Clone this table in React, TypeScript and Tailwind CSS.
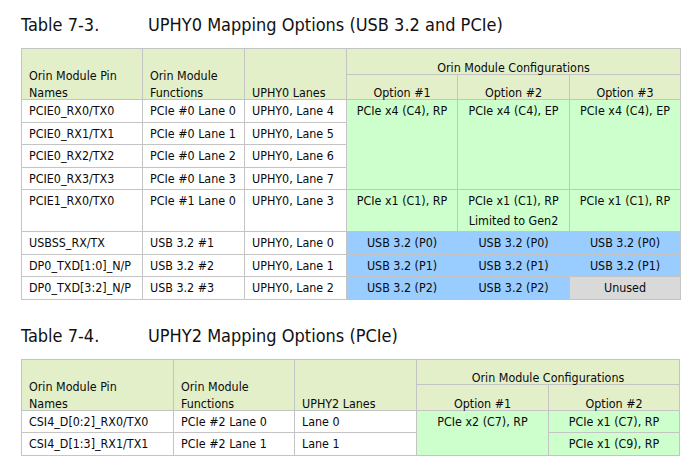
import React from "react";

const bd = "border-[1.5px] border-[#c4c4c4]";
const hdr = `${bd} bg-[#e2efc9] align-bottom px-[7px] pb-0 text-left leading-[17px] font-normal`;
const hdrC = `${bd} bg-[#e2efc9] align-bottom px-[7px] pb-0 text-center leading-[17px] font-normal`;
const td = `${bd} bg-white align-top px-[7px] pt-[3px] text-left leading-[16px] h-[22.5px]`;
const green = `${bd} bg-[#ccffcc] align-top pt-[3px] text-center leading-[16px]`;
const blue = `${bd} bg-[#99ccff] align-top pt-[3px] text-center leading-[16px]`;
const gray = `${bd} bg-[#d9d9d9] align-top pt-[3px] text-center leading-[16px]`;

function H({ children }: { children: React.ReactNode }) {
  return <div className="-mb-[2px]">{children}</div>;
}

function Title({ num, text }: { num: string; text: string }) {
  return (
    <div className="flex items-end text-[18px] leading-[24px] text-[#111]">
      <span className="w-[127px]">{num}</span>
      <span>{text}</span>
    </div>
  );
}

export default function App() {
  return (
    <div
      className="w-[690px] h-[472px] bg-white pl-[21px] pt-[13px] text-[12.4px] text-[#0a0a0a]"
      style={{ fontFamily: '"DejaVu Sans Condensed", "DejaVu Sans", sans-serif' }}
    >
      <Title num="Table 7-3." text="UPHY0 Mapping Options (USB 3.2 and PCIe)" />
      <table className="mt-[11px] border-collapse table-fixed w-[659px]">
        <colgroup>
          <col className="w-[121px]" />
          <col className="w-[102px]" />
          <col className="w-[102px]" />
          <col className="w-[111px]" />
          <col className="w-[112px]" />
          <col className="w-[111px]" />
        </colgroup>
        <thead>
          <tr className="h-[26px]">
            <th rowSpan={2} className={hdr}><H>Orin Module Pin<br />Names</H></th>
            <th rowSpan={2} className={hdr}><H>Orin Module<br />Functions</H></th>
            <th rowSpan={2} className={hdr}><H>UPHY0 Lanes</H></th>
            <th colSpan={3} className={hdrC}><H>Orin Module Configurations</H></th>
          </tr>
          <tr className="h-[25px]">
            <th className={hdrC}><H>Option #1</H></th>
            <th className={hdrC}><H>Option #2</H></th>
            <th className={hdrC}><H>Option #3</H></th>
          </tr>
        </thead>
        <tbody>
          <tr>
            <td className={td}>PCIE0_RX0/TX0</td>
            <td className={td}>PCIe #0 Lane 0</td>
            <td className={td}>UPHY0, Lane 4</td>
            <td rowSpan={4} className={green}>PCIe x4 (C4), RP</td>
            <td rowSpan={4} className={green}>PCIe x4 (C4), EP</td>
            <td rowSpan={4} className={green}>PCIe x4 (C4), EP</td>
          </tr>
          <tr>
            <td className={td}>PCIE0_RX1/TX1</td>
            <td className={td}>PCIe #0 Lane 1</td>
            <td className={td}>UPHY0, Lane 5</td>
          </tr>
          <tr>
            <td className={td}>PCIE0_RX2/TX2</td>
            <td className={td}>PCIe #0 Lane 2</td>
            <td className={td}>UPHY0, Lane 6</td>
          </tr>
          <tr>
            <td className={td}>PCIE0_RX3/TX3</td>
            <td className={td}>PCIe #0 Lane 3</td>
            <td className={td}>UPHY0, Lane 7</td>
          </tr>
          <tr className="h-[42px]">
            <td className={td}>PCIE1_RX0/TX0</td>
            <td className={td}>PCIe #1 Lane 0</td>
            <td className={td}>UPHY0, Lane 3</td>
            <td className={green}>PCIe x1 (C1), RP</td>
            <td className={`${green} !leading-[20px] !pt-[1px]`}>PCIe x1 (C1), RP<br />Limited to Gen2</td>
            <td className={green}>PCIe x1 (C1), RP</td>
          </tr>
          <tr>
            <td className={td}>USBSS_RX/TX</td>
            <td className={td}>USB 3.2 #1</td>
            <td className={td}>UPHY0, Lane 0</td>
            <td className={blue}>USB 3.2 (P0)</td>
            <td className={blue}>USB 3.2 (P0)</td>
            <td className={blue}>USB 3.2 (P0)</td>
          </tr>
          <tr>
            <td className={td}>DP0_TXD[1:0]_N/P</td>
            <td className={td}>USB 3.2 #2</td>
            <td className={td}>UPHY0, Lane 1</td>
            <td className={blue}>USB 3.2 (P1)</td>
            <td className={blue}>USB 3.2 (P1)</td>
            <td className={blue}>USB 3.2 (P1)</td>
          </tr>
          <tr>
            <td className={td}>DP0_TXD[3:2]_N/P</td>
            <td className={td}>USB 3.2 #3</td>
            <td className={td}>UPHY0, Lane 2</td>
            <td className={blue}>USB 3.2 (P2)</td>
            <td className={blue}>USB 3.2 (P2)</td>
            <td className={gray}>Unused</td>
          </tr>
        </tbody>
      </table>

      <div className="mt-[24px]">
        <Title num="Table 7-4." text="UPHY2 Mapping Options (PCIe)" />
      </div>
      <table className="mt-[11px] border-collapse table-fixed w-[658px]">
        <colgroup>
          <col className="w-[152px]" />
          <col className="w-[121px]" />
          <col className="w-[122px]" />
          <col className="w-[132px]" />
          <col className="w-[131px]" />
        </colgroup>
        <thead>
          <tr className="h-[25px]">
            <th rowSpan={2} className={hdr}><H>Orin Module Pin<br />Names</H></th>
            <th rowSpan={2} className={hdr}><H>Orin Module<br />Functions</H></th>
            <th rowSpan={2} className={hdr}><H>UPHY2 Lanes</H></th>
            <th colSpan={2} className={hdrC}><H>Orin Module Configurations</H></th>
          </tr>
          <tr className="h-[26px]">
            <th className={hdrC}><H>Option #1</H></th>
            <th className={hdrC}><H>Option #2</H></th>
          </tr>
        </thead>
        <tbody>
          <tr>
            <td className={td}>CSI4_D[0:2]_RX0/TX0</td>
            <td className={td}>PCIe #2 Lane 0</td>
            <td className={td}>Lane 0</td>
            <td rowSpan={2} className={green}>PCIe x2 (C7), RP</td>
            <td className={green}>PCIe x1 (C7), RP</td>
          </tr>
          <tr>
            <td className={td}>CSI4_D[1:3]_RX1/TX1</td>
            <td className={td}>PCIe #2 Lane 1</td>
            <td className={td}>Lane 1</td>
            <td className={green}>PCIe x1 (C9), RP</td>
          </tr>
        </tbody>
      </table>
    </div>
  );
}
